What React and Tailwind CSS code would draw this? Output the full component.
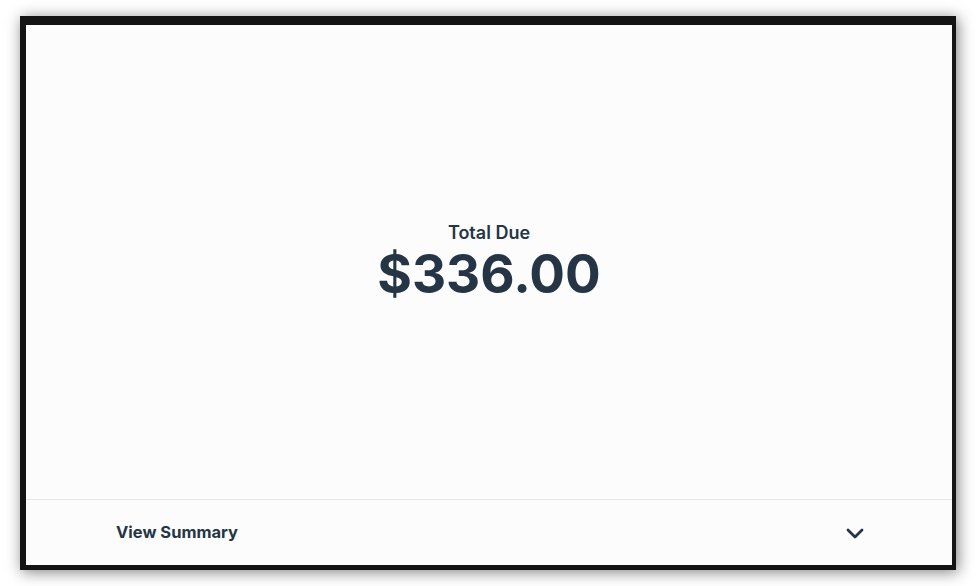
import React from "react";

export default function App() {
  return (
    <div
      className="w-[976px] h-[586px] bg-white pt-[16px] pl-[20px] overflow-hidden"
      style={{ fontFamily: "Inter, 'Noto Sans', sans-serif" }}
    >
      <div className="w-[936px] h-[554px] border-t-[9px] border-l-[6px] border-r-[4px] border-b-[5px] border-[#141414] shadow-[2px_2px_14px_rgba(0,0,0,0.5)] bg-[#fcfcfc] flex flex-col">
        {/* main */}
        <div className="flex-1 flex flex-col items-center justify-center text-[#253545]">
          <div className="text-[18px] font-semibold leading-[22px]">Total Due</div>
          <div className="text-[53px] font-bold leading-[56px] mt-[2px]">$336.00</div>
        </div>

        {/* footer */}
        <div className="h-[66px] border-t border-[#e3e6ea] flex items-center justify-between pl-[90px] pr-[88px] text-[#253545]">
          <span className="text-[16.5px] font-bold">View Summary</span>
          <svg width="18" height="12" viewBox="0 0 18 12" fill="none">
            <path d="M2 3l7 7 7-7" stroke="#253545" strokeWidth="2.8" strokeLinecap="round" strokeLinejoin="round" />
          </svg>
        </div>
      </div>
    </div>
  );
}
